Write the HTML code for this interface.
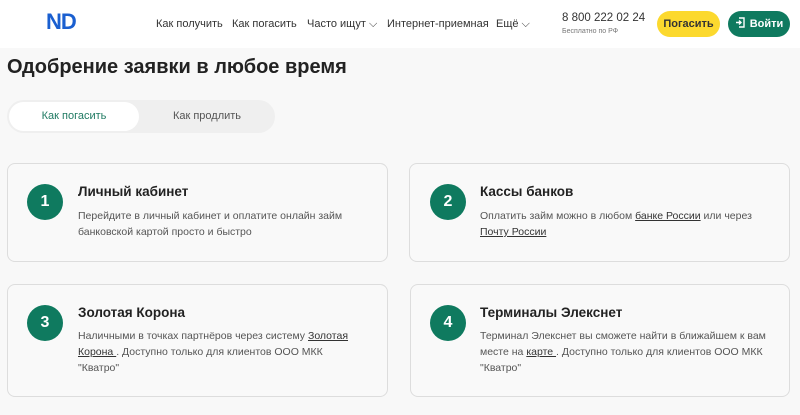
<!DOCTYPE html>
<html><head><meta charset="utf-8"><style>
*{margin:0;padding:0;box-sizing:border-box}
body{width:800px;height:415px;overflow:hidden;background:#f8f8f8;font-family:"Liberation Sans",sans-serif;color:#222;position:relative}
.hdr{position:absolute;left:0;top:0;width:800px;height:48px;background:#fff}
.a{position:absolute;white-space:nowrap}
.nav{font-size:11px;color:#333;top:18px}
.logo{left:46px;top:9px;font-size:22px;font-weight:bold;color:#1a5fd0;letter-spacing:-1px}
.btn{position:absolute;top:11px;height:26px;border-radius:13px;font-size:11px;font-weight:bold;text-align:center;line-height:26px}
h1{position:absolute;left:7px;top:56px;font-size:20px;font-weight:bold;color:#222;white-space:nowrap}
.tabs{position:absolute;left:7px;top:100px;width:268px;height:33px;border-radius:17px;background:#efefef}
.tab1{position:absolute;left:2px;top:2px;width:130px;height:29px;border-radius:15px;background:#fff;color:#1f7a62;font-size:11px;text-align:center;line-height:29px}
.tab2{position:absolute;left:140px;top:2px;width:120px;line-height:29px;font-size:11px;color:#555;text-align:center}
.card{position:absolute;border:1px solid #ddd;border-radius:8px;background:#f9f9f9}
.c{position:absolute;width:36px;height:36px;border-radius:50%;background:#0f7a5f;color:#fff;font-weight:bold;font-size:16px;text-align:center;line-height:36px}
.t{position:absolute;font-size:13.5px;font-weight:bold;color:#222;white-space:nowrap}
.d{position:absolute;font-size:10.5px;color:#555;line-height:16px}
.d u{color:#333}
</style></head><body>
<div class="hdr"></div>
<div class="a logo">ND</div>
<div class="a nav" style="left:156px">Как получить</div>
<div class="a nav" style="left:232px">Как погасить</div>
<div class="a nav" style="left:307px">Часто ищут ⌵</div>
<div class="a nav" style="left:387px">Интернет-приемная</div>
<div class="a nav" style="left:496px">Ещё ⌵</div>
<div class="a" style="left:562px;top:12px;font-size:11.5px;color:#333">8 800 222 02 24</div>
<div class="a" style="left:562px;top:28px;font-size:7px;color:#777">Бесплатно по РФ</div>
<div class="btn" style="left:657px;width:63px;background:#fcd92e;color:#333">Погасить</div>
<div class="btn" style="left:728px;width:62px;background:#0f7a5f;color:#fff"><svg width="10" height="11" viewBox="0 0 10 11" style="vertical-align:-1px;margin-right:5px"><path d="M4 1h5v9H4M1 5.5h5M4 3.5l2 2-2 2" stroke="#fff" stroke-width="1.4" fill="none"/></svg>Войти</div>
<h1>Одобрение заявки в любое время</h1>
<div class="tabs"><div class="tab1">Как погасить</div><div class="tab2">Как продлить</div></div>

<div class="card" style="left:7px;top:163px;width:381px;height:99px"></div>
<div class="c" style="left:27px;top:184px">1</div>
<div class="t" style="left:78px;top:184px">Личный кабинет</div>
<div class="d" style="left:78px;top:208px;width:300px">Перейдите в личный кабинет и оплатите онлайн займ банковской картой просто и быстро</div>

<div class="card" style="left:409px;top:163px;width:381px;height:99px"></div>
<div class="c" style="left:430px;top:184px">2</div>
<div class="t" style="left:480px;top:184px">Кассы банков</div>
<div class="d" style="left:480px;top:208px;width:300px">Оплатить займ можно в любом <u>банке России</u> или через <u>Почту России</u></div>

<div class="card" style="left:7px;top:284px;width:381px;height:113px"></div>
<div class="c" style="left:27px;top:305px">3</div>
<div class="t" style="left:78px;top:305px">Золотая Корона</div>
<div class="d" style="left:78px;top:328px;width:280px">Наличными в точках партнёров через систему <u>Золотая Корона </u>. Доступно только для клиентов ООО МКК "Кватро"</div>

<div class="card" style="left:410px;top:284px;width:380px;height:113px"></div>
<div class="c" style="left:430px;top:305px">4</div>
<div class="t" style="left:480px;top:305px">Терминалы Элекснет</div>
<div class="d" style="left:480px;top:328px;width:295px">Терминал Элекснет вы сможете найти в ближайшем к вам месте на <u>карте </u>. Доступно только для клиентов ООО МКК "Кватро"</div>
</body></html>
